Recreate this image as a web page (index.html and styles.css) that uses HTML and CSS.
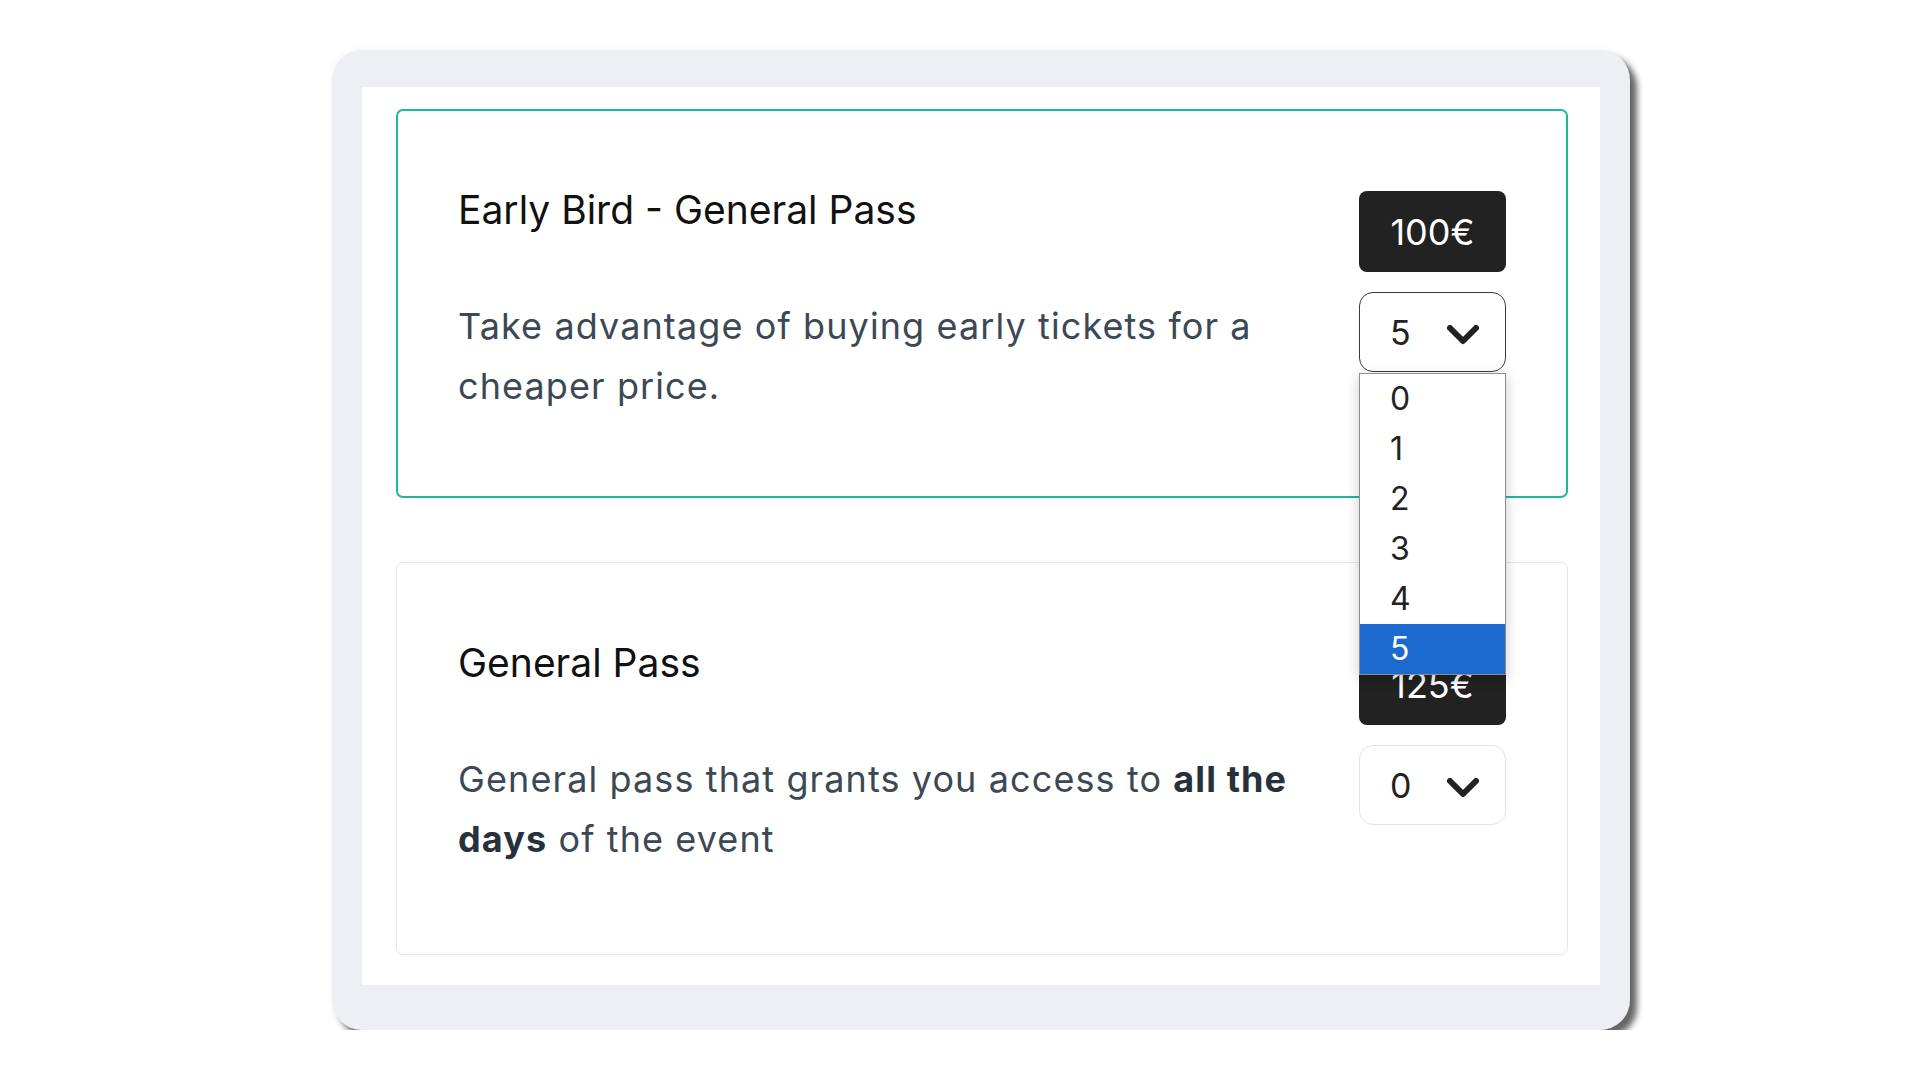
FILE: index.html
```html
<!DOCTYPE html>
<html lang="en">
<head>
<meta charset="utf-8">
<title>Tickets</title>
<link rel="stylesheet" href="styles.css">
</head>
<body>
<div class="frame">
  <div class="sheet">
    <div class="ticket ticket-active">
      <div class="info">
        <h2 class="title">Early Bird - General Pass</h2>
        <p class="desc">Take advantage of buying early tickets for a cheaper price.</p>
      </div>
      <div class="side">
        <div class="price">100€</div>
        <div class="qty qty-open">
          <span class="qty-value">5</span>
          <svg class="chev" viewBox="0 0 32 20" width="32" height="20"><polyline points="3,3 16,16 29,3" fill="none" stroke="#222" stroke-width="6" stroke-linecap="round" stroke-linejoin="round"/></svg>
        </div>
        <ul class="menu">
          <li class="opt">0</li>
          <li class="opt">1</li>
          <li class="opt">2</li>
          <li class="opt">3</li>
          <li class="opt">4</li>
          <li class="opt opt-sel">5</li>
        </ul>
      </div>
    </div>
    <div class="ticket">
      <div class="info">
        <h2 class="title">General Pass</h2>
        <p class="desc">General pass that grants you access to <b>all the</b> <b>days</b> of the event</p>
      </div>
      <div class="side">
        <div class="price">125€</div>
        <div class="qty">
          <span class="qty-value">0</span>
          <svg class="chev" viewBox="0 0 32 20" width="32" height="20"><polyline points="3,3 16,16 29,3" fill="none" stroke="#222" stroke-width="6" stroke-linecap="round" stroke-linejoin="round"/></svg>
        </div>
      </div>
    </div>
  </div>
</div>
</body>
</html>
```

FILE: styles.css
```css
* { box-sizing: border-box; }
html, body { margin: 0; padding: 0; background: #fff; }
body {
  font-family: Inter, "Noto Sans", sans-serif;
  padding-top: 50px;
}
.frame {
  margin-left: 332px;
  width: 1298px;
  height: 980px;
  padding: 37px 30px 45px;
  background: #eeeff3;
  border-radius: 30px;
  box-shadow: 0 0 8px rgba(0,0,0,0.05), 7px 7px 6px rgba(0,0,0,0.6);
}
.sheet {
  background: #fff;
  height: 100%;
  padding: 22px 32px 30px 34px;
  display: flex;
  flex-direction: column;
  gap: 64px;
}
.ticket {
  height: 393px;
  border: 1px solid #e6e7ee;
  border-radius: 7px;
  padding: 81px 61px 0;
  display: flex;
  justify-content: space-between;
  gap: 20px;
}
.ticket-active {
  height: 389px;
  border: 2px solid #1cbb95;
  padding: 80px 60px 0;
}
.info { flex: 1; }
.title {
  margin: -5px 0 0;
  font-size: 39px;
  line-height: 47px;
  font-weight: 400;
  color: #111;
}
.desc {
  margin: 63px 0 0;
  font-size: 36px;
  line-height: 60px;
  color: #3c4854;
  letter-spacing: 1.1px;
}
.desc b { font-weight: 700; color: #26313c; }
.side {
  width: 147px;
  flex: none;
  position: relative;
}
.price {
  height: 81px;
  background: #222;
  color: #fff;
  border-radius: 8px;
  font-size: 36px;
  display: flex;
  align-items: center;
  justify-content: center;
}
.qty {
  margin-top: 20px;
  height: 80px;
  border: 1px solid #e3e4ea;
  border-radius: 14px;
  display: flex;
  align-items: center;
  justify-content: space-between;
  padding: 0 26px 0 30px;
  font-size: 34px;
  color: #222;
}
.qty-open { border-color: #3a3a3a; }
.chev { display: block; margin-top: 6px; }
.menu {
  position: absolute;
  left: 0;
  top: 182px;
  width: 147px;
  margin: 0;
  padding: 0;
  list-style: none;
  background: #fff;
  border: 1px solid #8e8e8e;
  box-shadow: 0 4px 12px rgba(0,0,0,0.22);
  z-index: 5;
}
.opt {
  height: 50px;
  line-height: 50px;
  padding-left: 30px;
  font-size: 32px;
  color: #222;
}
.opt-sel { background: #1b6acf; color: #fff; }
```
